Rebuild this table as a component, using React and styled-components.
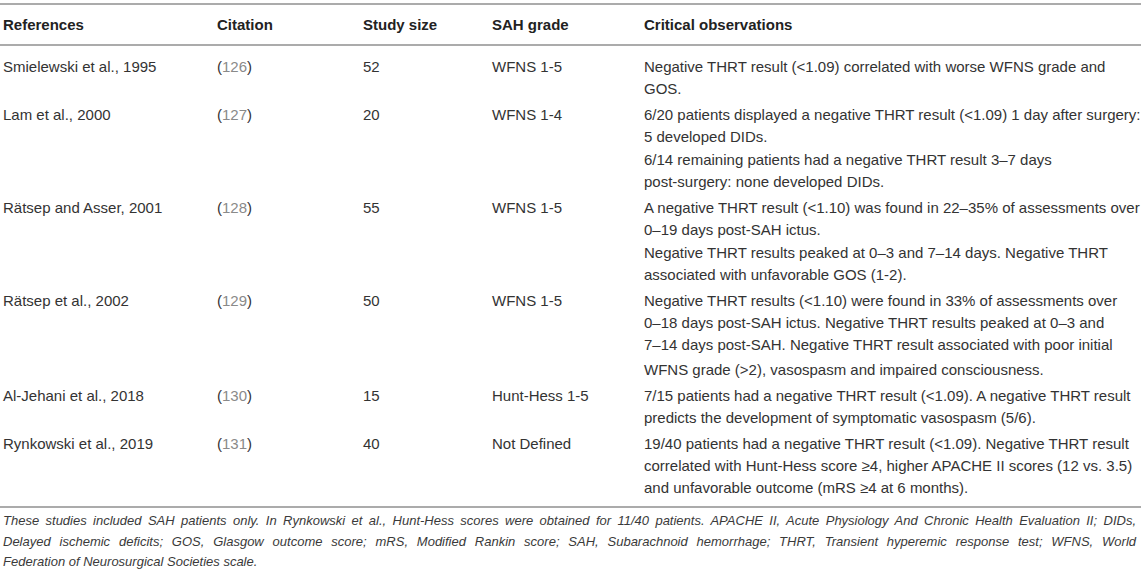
import React from "react";
import styled, { createGlobalStyle } from "styled-components";

const Global = createGlobalStyle`
  html, body { margin: 0; padding: 0; background: #ffffff; }
  body { font-family: "Liberation Sans", Arial, sans-serif; color: #333; }
`;

const Wrap = styled.div`
  width: 1141px;
  padding-top: 3px;
`;

const Table = styled.table`
  width: 1141px;
  border-collapse: collapse;
  table-layout: fixed;
  font-size: 15px;
  border-top: 2px solid #ababab;
  border-bottom: 2px solid #ababab;
`;

const HeadRow = styled.tr`
  border-bottom: 2px solid #ababab;
`;

const HeadCell = styled.th`
  height: 38px;
  padding: 0 0 1px 0;
  padding-left: ${(p) => (p.$first ? "3px" : "0")};
  text-align: left;
  vertical-align: middle;
  font-weight: 700;
  color: #222;
`;

const Row = styled.tr`
  & > td { padding-top: 2px; padding-bottom: 2px; }
  &:first-child > td { padding-top: 10px; }
  &:last-child > td { padding-bottom: 7px; }
`;

const Cell = styled.td`
  padding-left: ${(p) => (p.$first ? "3px" : "0")};
  vertical-align: top;
  line-height: 22px;
  white-space: nowrap;
  color: #333;
`;

const Para = styled.div`
  margin-top: ${(p) => p.$gap || 0}px;
`;

const Ref = styled.span`
  color: #8a8a8a;
`;

const Notes = styled.div`
  margin-top: 3px;
  padding-left: 3px;
  width: 1133px;
  font-size: 13px;
  font-style: italic;
  line-height: 20.7px;
  color: #3a3a3a;
`;

const NoteLine = styled.div`
  text-align: ${(p) => (p.$last ? "left" : "justify")};
  text-align-last: ${(p) => (p.$last ? "left" : "justify")};
`;

const rows = [
  {
    ref: "Smielewski et al., 1995",
    cit: "126",
    size: "52",
    grade: "WFNS 1-5",
    obs: [["Negative THRT result (<1.09) correlated with worse WFNS grade and", "GOS."]],
  },
  {
    ref: "Lam et al., 2000",
    cit: "127",
    size: "20",
    grade: "WFNS 1-4",
    obs: [
      ["6/20 patients displayed a negative THRT result (<1.09) 1 day after surgery:", "5 developed DIDs."],
      ["6/14 remaining patients had a negative THRT result 3–7 days", "post-surgery: none developed DIDs."],
    ],
    gap: 1,
  },
  {
    ref: "Rätsep and Asser, 2001",
    cit: "128",
    size: "55",
    grade: "WFNS 1-5",
    obs: [
      ["A negative THRT result (<1.10) was found in 22–35% of assessments over", "0–19 days post-SAH ictus."],
      ["Negative THRT results peaked at 0–3 and 7–14 days. Negative THRT", "associated with unfavorable GOS (1-2)."],
    ],
    gap: 1,
  },
  {
    ref: "Rätsep et al., 2002",
    cit: "129",
    size: "50",
    grade: "WFNS 1-5",
    obs: [
      [
        "Negative THRT results (<1.10) were found in 33% of assessments over",
        "0–18 days post-SAH ictus. Negative THRT results peaked at 0–3 and",
        "7–14 days post-SAH. Negative THRT result associated with poor initial",
      ],
      ["WFNS grade (>2), vasospasm and impaired consciousness."],
    ],
    gap: 3,
  },
  {
    ref: "Al-Jehani et al., 2018",
    cit: "130",
    size: "15",
    grade: "Hunt-Hess 1-5",
    obs: [
      [
        "7/15 patients had a negative THRT result (<1.09). A negative THRT result",
        "predicts the development of symptomatic vasospasm (5/6).",
      ],
    ],
  },
  {
    ref: "Rynkowski et al., 2019",
    cit: "131",
    size: "40",
    grade: "Not Defined",
    obs: [
      [
        "19/40 patients had a negative THRT result (<1.09). Negative THRT result",
        "correlated with Hunt-Hess score ≥4, higher APACHE II scores (12 vs. 3.5)",
        "and unfavorable outcome (mRS ≥4 at 6 months).",
      ],
    ],
  },
];

export default function App() {
  return (
    <Wrap>
      <Global />
      <Table>
        <colgroup>
          <col style={{ width: 217 }} />
          <col style={{ width: 146 }} />
          <col style={{ width: 129 }} />
          <col style={{ width: 152 }} />
          <col style={{ width: 497 }} />
        </colgroup>
        <thead>
          <HeadRow>
            <HeadCell $first>References</HeadCell>
            <HeadCell>Citation</HeadCell>
            <HeadCell>Study size</HeadCell>
            <HeadCell>SAH grade</HeadCell>
            <HeadCell>Critical observations</HeadCell>
          </HeadRow>
        </thead>
        <tbody>
          {rows.map((r) => (
            <Row key={r.ref}>
              <Cell $first>{r.ref}</Cell>
              <Cell>
                (<Ref>{r.cit}</Ref>)
              </Cell>
              <Cell>{r.size}</Cell>
              <Cell>{r.grade}</Cell>
              <Cell>
                {r.obs.map((para, i) => (
                  <Para key={i} $gap={i > 0 ? r.gap : 0}>
                    {para.map((line, j) => (
                      <div key={j}>{line}</div>
                    ))}
                  </Para>
                ))}
              </Cell>
            </Row>
          ))}
        </tbody>
      </Table>
      <Notes>
        <NoteLine>
          These studies included SAH patients only. In Rynkowski et al., Hunt-Hess scores were obtained for 11/40 patients. APACHE II, Acute Physiology And Chronic Health Evaluation II; DIDs,
        </NoteLine>
        <NoteLine>
          Delayed ischemic deficits; GOS, Glasgow outcome score; mRS, Modified Rankin score; SAH, Subarachnoid hemorrhage; THRT, Transient hyperemic response test; WFNS, World
        </NoteLine>
        <NoteLine $last>Federation of Neurosurgical Societies scale.</NoteLine>
      </Notes>
    </Wrap>
  );
}
